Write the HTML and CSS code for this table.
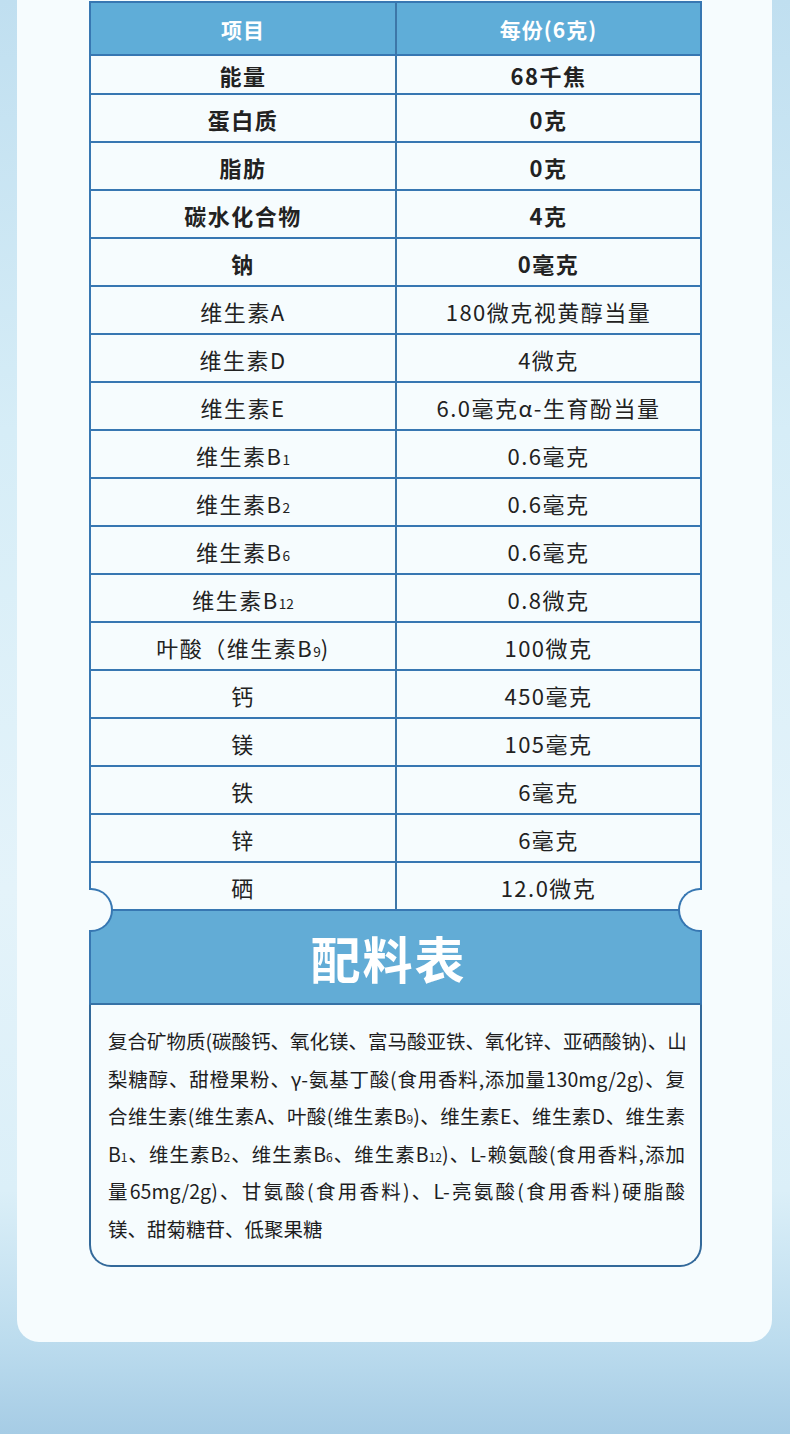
FILE: index.html
```html
<!DOCTYPE html>
<html lang="zh-CN">
<head>
<meta charset="utf-8">
<title>营养成分表</title>
<link rel="stylesheet" href="styles.css">
</head>
<body>
<div class="page">
  <div class="card">
    <div class="nutrition">
      <div class="row head"><div class="cell"><span>项目</span></div><div class="cell"><span>每份(6克)</span></div></div>
      <div class="row first bold"><div class="cell"><span>能量</span></div><div class="cell"><span>68千焦</span></div></div>
      <div class="row bold"><div class="cell"><span>蛋白质</span></div><div class="cell"><span>0克</span></div></div>
      <div class="row bold"><div class="cell"><span>脂肪</span></div><div class="cell"><span>0克</span></div></div>
      <div class="row bold"><div class="cell"><span>碳水化合物</span></div><div class="cell"><span>4克</span></div></div>
      <div class="row bold"><div class="cell"><span>钠</span></div><div class="cell"><span>0毫克</span></div></div>
      <div class="row"><div class="cell"><span>维生素A</span></div><div class="cell"><span>180微克视黄醇当量</span></div></div>
      <div class="row"><div class="cell"><span>维生素D</span></div><div class="cell"><span>4微克</span></div></div>
      <div class="row"><div class="cell"><span>维生素E</span></div><div class="cell"><span>6.0毫克α-生育酚当量</span></div></div>
      <div class="row"><div class="cell"><span>维生素B<sub>1</sub></span></div><div class="cell"><span>0.6毫克</span></div></div>
      <div class="row"><div class="cell"><span>维生素B<sub>2</sub></span></div><div class="cell"><span>0.6毫克</span></div></div>
      <div class="row"><div class="cell"><span>维生素B<sub>6</sub></span></div><div class="cell"><span>0.6毫克</span></div></div>
      <div class="row"><div class="cell"><span>维生素B<sub>12</sub></span></div><div class="cell"><span>0.8微克</span></div></div>
      <div class="row"><div class="cell"><span>叶酸（维生素B<sub>9</sub>)</span></div><div class="cell"><span>100微克</span></div></div>
      <div class="row"><div class="cell"><span>钙</span></div><div class="cell"><span>450毫克</span></div></div>
      <div class="row"><div class="cell"><span>镁</span></div><div class="cell"><span>105毫克</span></div></div>
      <div class="row"><div class="cell"><span>铁</span></div><div class="cell"><span>6毫克</span></div></div>
      <div class="row"><div class="cell"><span>锌</span></div><div class="cell"><span>6毫克</span></div></div>
      <div class="row"><div class="cell"><span>硒</span></div><div class="cell"><span>12.0微克</span></div></div>
    </div>
    <section class="ingredients">
      <span class="notch notch-left"></span>
      <span class="notch notch-right"></span>
      <div class="band"><h2 class="band-title">配料表</h2></div>
      <div class="box">
        <p class="ing-text">
          <span class="line">复合矿物质(碳酸钙、氧化镁、富马酸亚铁、氧化锌、亚硒酸钠)、山</span>
          <span class="line">梨糖醇、甜橙果粉、γ-氨基丁酸(食用香料,添加量130mg/2g)、复</span>
          <span class="line">合维生素(维生素A、叶酸(维生素B<sub>9</sub>)、维生素E、维生素D、维生素</span>
          <span class="line">B<sub>1</sub>、维生素B<sub>2</sub>、维生素B<sub>6</sub>、维生素B<sub>12</sub>)、L-赖氨酸(食用香料,添加</span>
          <span class="line">量65mg/2g)、甘氨酸(食用香料)、L-亮氨酸(食用香料)硬脂酸</span>
          <span class="line last">镁、甜菊糖苷、低聚果糖</span>
        </p>
      </div>
    </section>
  </div>
</div>
</body>
</html>
```

FILE: styles.css
```css
* { box-sizing: border-box; }

html, body {
  margin: 0;
  padding: 0;
}

body {
  font-family: "Noto Sans CJK SC", "Noto Sans", sans-serif;
  color: #222;
}

.page {
  height: 1434px;
  padding: 0 18px 0 17px;
  background: linear-gradient(180deg,
    #c0dff0 0%,
    #d6edf7 30%,
    #e4f3fa 62%,
    #dbeff8 83%,
    #bcdcee 93.5%,
    #a6cce5 100%);
}

.card {
  background: #f6fcfe;
  border-radius: 0 0 22px 22px;
  padding: 1px 70px 75px 72px;
}

/* nutrition table */
.nutrition {
  border: 2px solid #3777b2;
  border-bottom: none;
}

.row {
  display: grid;
  grid-template-columns: 306px 1fr;
  height: 48px;
  border-bottom: 2px solid #3777b2;
}

.row.head {
  height: 53px;
  background: #5fadd8;
  color: #fff;
  font-weight: 700;
}

.row.first { height: 39px; }

.cell {
  display: flex;
  align-items: center;
  justify-content: center;
  font-size: 22px;
  letter-spacing: 1.5px;
  padding-top: 1px;
}

.cell:first-child {
  border-right: 2px solid #3d77a8;
}

.row.head .cell {
  font-size: 21px;
  letter-spacing: 1px;
  padding-top: 0;
}

.row.bold .cell {
  font-weight: 700;
}

sub {
  font-size: 0.62em;
  vertical-align: baseline;
  letter-spacing: 0;
  line-height: 0;
}

/* ingredients */
.ingredients {
  position: relative;
}

.notch {
  position: absolute;
  top: -23px;
  width: 24px;
  height: 44px;
  background: #f6fcfe;
  border: 2px solid #3777b2;
  z-index: 2;
}

.notch-left {
  left: 0;
  border-left: none;
  border-radius: 0 22px 22px 0;
}

.notch-right {
  right: 0;
  border-right: none;
  border-radius: 22px 0 0 22px;
}

.band {
  height: 94px;
  background: #62acd6;
  border-left: 2px solid #3777b2;
  border-right: 2px solid #3777b2;
  border-bottom: 2px solid #3672a6;
  display: flex;
  align-items: center;
  justify-content: center;
}

.band-title {
  margin: 0 14px 0 0;
  color: #fff;
  font-size: 50px;
  font-weight: 700;
  letter-spacing: 2px;
  line-height: 1;
}

.box {
  border: 2px solid #33699a;
  border-top: none;
  border-radius: 0 0 22px 22px;
  padding: 17px 15px 18px 17px;
}

.ing-text {
  margin: 0;
  font-size: 19.5px;
  line-height: 37.5px;
  color: #1e1e1e;
}

.line {
  display: block;
  height: 37.5px;
  text-align: justify;
  text-align-last: justify;
  white-space: nowrap;
}

.line.last {
  text-align-last: left;
}
```
